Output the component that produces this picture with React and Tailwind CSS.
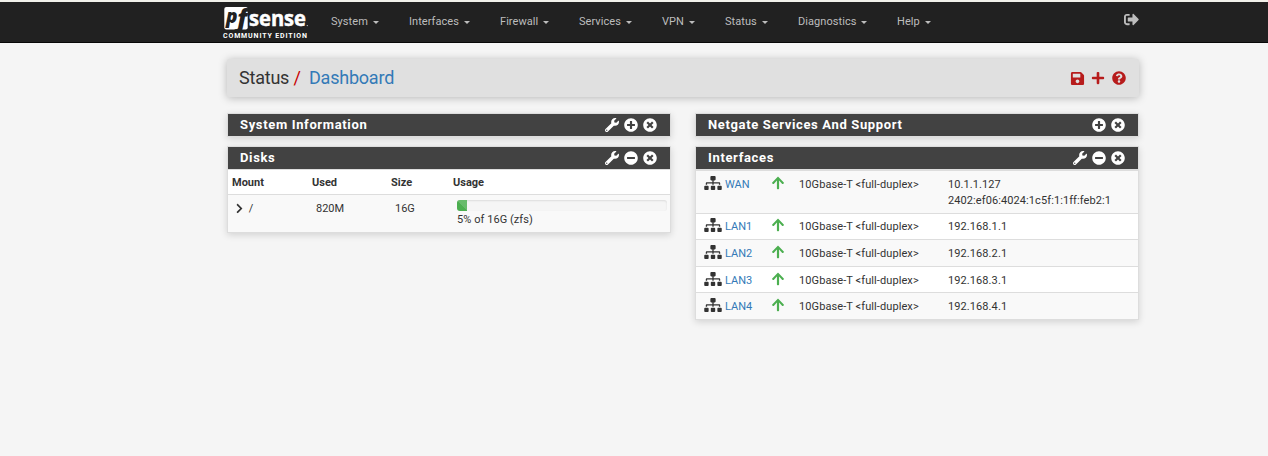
import React from "react";
import {
  FaWrench, FaPlusCircle, FaMinusCircle, FaTimesCircle, FaSitemap, FaArrowUp,
  FaChevronRight, FaSave, FaPlus, FaQuestionCircle, FaSignOutAlt,
} from "react-icons/fa";

const menu = [
  ["System", "w-[78px]"],
  ["Interfaces", "w-[91px]"],
  ["Firewall", "w-[79px]"],
  ["Services", "w-[83px]"],
  ["VPN", "w-[63px]"],
  ["Status", "w-[73px]"],
  ["Diagnostics", "w-[99px]"],
  ["Help", "w-[50px]"],
];

const interfaces = [
  { name: "WAN", ips: ["10.1.1.127", "2402:ef06:4024:1c5f:1:1ff:feb2:1"], row: "h-[43px] bg-[#f9f9f9] border-b pt-[5px]" },
  { name: "LAN1", ips: ["192.168.1.1"], row: "h-[26px] bg-white border-b pt-[4px]" },
  { name: "LAN2", ips: ["192.168.2.1"], row: "h-[27px] bg-[#f9f9f9] border-b pt-[5px]" },
  { name: "LAN3", ips: ["192.168.3.1"], row: "h-[26px] bg-white border-b pt-[5px]" },
  { name: "LAN4", ips: ["192.168.4.1"], row: "h-[26px] bg-[#f9f9f9] pt-[5px]" },
];

function Logo() {
  return (
    <svg width="90" height="38" viewBox="0 0 90 38" className="block shrink-0 overflow-visible" aria-label="pfSense">
      <rect x="2.3" y="5" width="23.4" height="22.4" rx="2" fill="#fff" />
      <g fontFamily="Open Sans" fontWeight="800" fontStyle="italic" fill="#212121">
        <text x="4" y="21" fontSize="19">p</text>
        <text x="15.3" y="25" fontSize="24" textLength="10" lengthAdjust="spacingAndGlyphs">f</text>
      </g>
      <text x="27" y="24" fontFamily="Open Sans" fontWeight="700" fontSize="20.5" textLength="57" lengthAdjust="spacingAndGlyphs" fill="#fff" stroke="#fff" strokeWidth="0.5">sense</text>
      <circle cx="85.3" cy="23.6" r="0.7" fill="#bbb" />
      <text x="1" y="36" fontFamily="Roboto" fontWeight="700" fontSize="7" textLength="84" lengthAdjust="spacing" fill="#fff">COMMUNITY EDITION</text>
    </svg>
  );
}

function Panel({ title, icons, children }) {
  return (
    <section className="border border-[#ddd] bg-white shadow-[0_2px_7px_rgba(0,0,0,0.14)]">
      <header className="flex h-[22px] items-center justify-between bg-[#424242] pl-3 pr-[13px] text-white">
        <h2 className="text-[13px] font-bold leading-[22px] tracking-[0.65px]">{title}</h2>
        <div className="flex items-center gap-[5px] text-[14px]">
          {icons.map((Icon, i) => <Icon key={i} />)}
        </div>
      </header>
      {children}
    </section>
  );
}

export default function App() {
  return (
    <div className="h-[456px] overflow-hidden bg-[#f5f5f5] font-[Roboto,sans-serif] text-[11px] text-[#333]">
      <div className="h-[2px] bg-[#f1f1ea]" />
      <nav className="flex h-[41px] border-b border-[#080808] bg-[#212121] pl-[222px] text-[#bdbdbd]">
        <div className="w-[109px]"><Logo /></div>
        {menu.map(([label, width]) => (
          <div key={label} className={"flex h-[40px] shrink-0 items-center tracking-[0.06px] " + width}>
            <span className="leading-[16px] pb-px">{label}</span>
            <span className="ml-[5px] mt-px border-x-[3px] border-t-[3px] border-x-transparent border-t-[#bdbdbd]" />
          </div>
        ))}
        <FaSignOutAlt className="ml-[177px] mt-[10px] text-[15px]" />
      </nav>
      <main className="ml-[227px] w-[912px] pt-4">
        <header className="flex h-[38px] items-center justify-between rounded-[2px] bg-[#e0e0e0] pl-3 pr-[13px] shadow-[0_1px_8px_rgba(0,0,0,0.26)]">
          <h1 className="flex text-[18px] leading-[38px] tracking-[-0.22px]">
            <span className="w-[54.5px]">Status</span>
            <span className="w-[15.5px] text-[#c90000]">/</span>
            <span className="text-[#337ab7]">Dashboard</span>
          </h1>
          <div className="flex items-center gap-[6px] text-[14px] text-[#b71c1c]">
            <FaSave className="text-[15px]" /><FaPlus /><FaQuestionCircle className="ml-px" />
          </div>
        </header>
        <div className="mt-4 flex items-start justify-between">
          <div className="flex w-[444px] flex-col gap-[9px]">
            <Panel title="System Information" icons={[FaWrench, FaPlusCircle, FaTimesCircle]} />
            <Panel title="Disks" icons={[FaWrench, FaMinusCircle, FaTimesCircle]}>
              <div className="grid h-[26px] grid-cols-[80px_79px_62px_1fr] border-y border-[#ddd] pl-1 font-bold leading-[26px]">
                <span>Mount</span><span>Used</span><span>Size</span><span>Usage</span>
              </div>
              <div className="grid h-[37px] grid-cols-[80px_79px_62px_1fr] bg-[#f9f9f9] pl-2">
                <span className="flex h-[28px] items-center"><FaChevronRight className="-ml-[2px] mr-[1px] mb-px text-[11px]" />&nbsp;/</span>
                <span className="leading-[28px]">820M</span>
                <span className="leading-[28px]">16G</span>
                <div className="pr-[3px] pt-[5px]">
                  <div className="h-[11px] overflow-hidden rounded-[3px] bg-[#f5f5f5] shadow-[inset_0_1px_2px_rgba(0,0,0,0.1)]">
                    <div className="h-full w-[10px] bg-[#4caf50] bg-[linear-gradient(45deg,transparent_50%,rgba(255,255,255,0.15)_50%)]" />
                  </div>
                  <div className="pt-px leading-[16px] tracking-[0.06px]">5% of 16G (zfs)</div>
                </div>
              </div>
            </Panel>
          </div>
          <div className="flex w-[444px] flex-col gap-[9px]">
            <Panel title="Netgate Services And Support" icons={[FaPlusCircle, FaTimesCircle]} />
            <Panel title="Interfaces" icons={[FaWrench, FaMinusCircle, FaTimesCircle]}>
              <div className="border-t-2 border-[#ddd]">
                {interfaces.map((item) => (
                  <div key={item.name} className={"grid grid-cols-[21px_46px_28px_149px_1fr] items-start border-[#ddd] pl-2 leading-[16px] " + item.row}>
                    <FaSitemap className="h-[14px] w-[18px]" />
                    <span className="pt-px text-[#337ab7]">{item.name}</span>
                    <FaArrowUp className="text-[14px] text-[#4caf50]" />
                    <span className="pt-px tracking-[0.09px]">10Gbase-T &lt;full-duplex&gt;</span>
                    <div className="pt-px tracking-[0.09px]">{item.ips.map((ip) => <div key={ip}>{ip}</div>)}</div>
                  </div>
                ))}
              </div>
            </Panel>
          </div>
        </div>
      </main>
    </div>
  );
}
